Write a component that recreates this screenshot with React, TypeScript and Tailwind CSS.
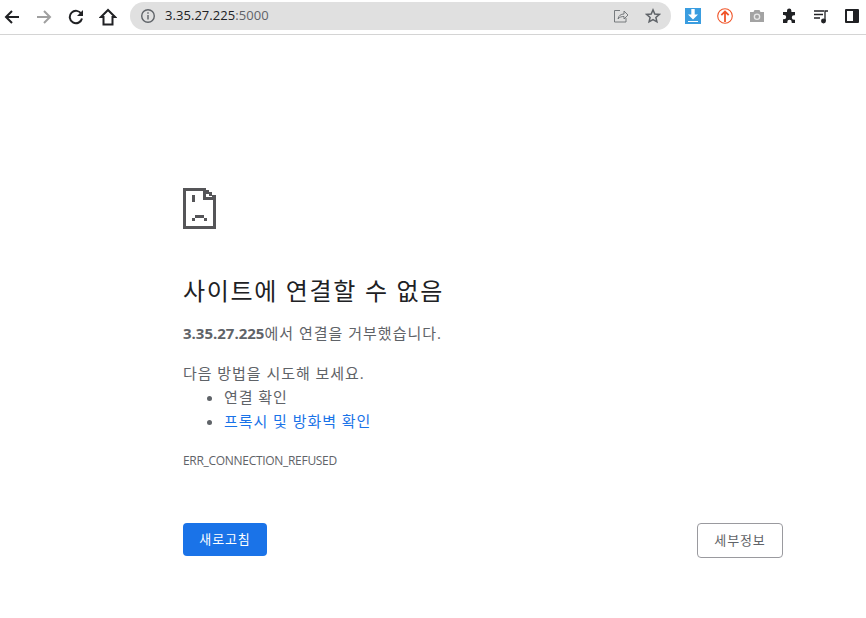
import React from "react";

const font = "font-['Open_Sans','Noto_Sans_CJK_KR',sans-serif]";

function SadTab() {
  const rects = [
    [0, 0, 23, 3], [0, 0, 3, 41], [0, 38, 33, 3], [30, 11, 3, 30],
    [20, 3, 3, 9], [20, 9, 10, 3], [23, 2, 3, 4], [26, 4, 3, 4], [29, 7, 4, 5],
    [9, 7, 3, 7], [12, 27, 9, 3], [9, 30, 3, 3], [21, 30, 3, 3],
  ];
  return (
    <svg width="33" height="41" viewBox="0 0 33 41" fill="#555558" shapeRendering="crispEdges" className="block">
      {rects.map((r, i) => <rect key={i} x={r[0]} y={r[1]} width={r[2]} height={r[3]} />)}
    </svg>
  );
}

function NavButton({ children }: { children: React.ReactNode }) {
  return <div className="w-8 h-8 flex items-center justify-center shrink-0">{children}</div>;
}

export default function App() {
  return (
    <div className={`w-[866px] h-[618px] bg-white overflow-hidden ${font}`}>
      <header className="h-[35px] border-b border-[#d4d4d4] flex items-center">
        <div className="flex items-center -ml-1 mr-[4px] w-[130px] shrink-0">
          <NavButton>
            <svg width="16" height="16" viewBox="0 0 16 16" fill="none" stroke="#202124" strokeWidth="2">
              <path d="M15 8H2M8 2 2 8l6 6" />
            </svg>
          </NavButton>
          <div className="w-[31px] h-8 flex items-center justify-center shrink-0">
            <svg width="16" height="16" viewBox="0 0 16 16" fill="none" stroke="#a0a0a0" strokeWidth="2">
              <path d="M1 8h13M8 2l6 6-6 6" />
            </svg>
          </div>
          <div className="w-[33px] h-8 flex items-center justify-center shrink-0">
            <svg width="16" height="16" viewBox="0 0 16 16" fill="none">
              <path d="M13.4 5A6.2 6.2 0 1 0 14 9.5" stroke="#202124" strokeWidth="2" />
              <path d="M15 1v6H9z" fill="#202124" />
            </svg>
          </div>
          <div className="w-8 h-8 flex items-center justify-center shrink-0">
            <svg width="18" height="18" viewBox="0 0 18 18" fill="none" stroke="#202124" strokeWidth="2">
              <path d="M9 2 2 9h2.500v7.500h9V9H16z" />
            </svg>
          </div>
        </div>
        <div className="w-[541px] h-7 rounded-full bg-[#e0e0e0] flex items-center pl-[10px] pr-[10px] shrink-0 mb-[2px]">
          <svg width="16" height="16" viewBox="0 0 16 16" fill="none" stroke="#5f6368" strokeWidth="1.400">
            <circle cx="8" cy="8" r="6.300" />
            <path d="M8 7v4.500M8 4.300v1.500" />
          </svg>
          <span className="ml-[9px] text-[13px] text-[#202124] tracking-[0.05px]">3.35.27.225<span className="text-[#5f6368]">:5000</span></span>
          <div className="ml-auto flex items-center gap-4">
            <svg width="16" height="16" viewBox="0 0 16 16" fill="none" stroke="#6b6f73" strokeWidth="0.900">
              <path d="M7 2.500H1.500v11.500H13V10" />
              <path d="M5 11c.5-3.500 3-5 6-5V3l4 4-4 4V8.500c-2.500 0-4.500.5-6 2.500z" />
            </svg>
            <svg width="16" height="16" viewBox="0 0 16 16" fill="none" stroke="#5f6368" strokeWidth="1.500">
              <path d="M8 1.900 9.800 6l4.500.4-3.400 3 1 4.400L8 11.500l-3.900 2.300 1-4.400-3.400-3L6.200 6z" />
            </svg>
          </div>
        </div>
        <div className="flex items-center ml-[14px] gap-4 shrink-0 mb-[2px]">
          <svg width="16" height="16" viewBox="0 0 16 16" className="block">
            <rect width="16" height="16" fill="#3a9de0" />
            <path d="M6.300 1h3.400v5.500H13L8 11.500 3 6.500h3.300z" fill="#fff" />
            <rect x="3" y="13" width="10" height="1" fill="#fff" />
          </svg>
          <svg width="16" height="16" viewBox="0 0 16 16" fill="none" stroke="#f0562a" className="block">
            <circle cx="8" cy="8" r="7.300" strokeWidth="1.100" />
            <path d="M8 14V3.500M4.300 7.200 8 3.500l3.700 3.700" strokeWidth="1.800" />
          </svg>
          <svg width="16" height="16" viewBox="0 0 16 16" className="block">
            <path d="M1 4h3.500l1-2h5l1 2H15v10H1z" fill="#a3a3a3" />
            <circle cx="8" cy="8.700" r="3.300" fill="#e8e8e8" />
            <circle cx="8" cy="8.700" r="2" fill="#a3a3a3" />
          </svg>
          <svg width="16" height="16" viewBox="0 0 16 16" fill="#202124" className="block">
            <path d="M6 2.800a2.200 2.200 0 0 1 4.400 0V4H14v3.300h-1a2.200 2.200 0 0 0 0 4.400h1V15h-3.300v-1a2.200 2.200 0 0 0-4.400 0v1H2v-3.700h1a2.200 2.200 0 0 0 0-4.400H2V4h4z" />
          </svg>
          <svg width="16" height="16" viewBox="0 0 16 16" fill="none" stroke="#202124" strokeWidth="1.300" className="block">
            <path d="M1 3h10M1 6.500h9M1 10h6M12 13V3h3" />
            <circle cx="10.500" cy="13" r="1.800" fill="#202124" />
          </svg>
          <svg width="14" height="14" viewBox="0 0 14 14" className="block">
            <rect width="14" height="14" rx="1" fill="#202124" />
            <rect x="2" y="2" width="6" height="10" fill="#fff" />
          </svg>
        </div>
      </header>

      <main className="w-[600px] ml-[183px] pt-[153px]">
        <SadTab />
        <h1 className="mt-[44px] text-[24px] leading-[36px] font-normal text-[#202124] tracking-[1.65px]">사이트에 연결할 수 없음</h1>
        <p className="mt-[12px] text-[15px] leading-[24px] text-[#5f6368]"><strong className="font-bold">3.35.27.225</strong><span className="tracking-[1px]">에서 연결을 거부했습니다.</span></p>
        <p className="mt-[16px] text-[15px] leading-[24px] text-[#5f6368] tracking-[0.95px]">다음 방법을 시도해 보세요.</p>
        <ul className="list-disc pl-[41px] text-[15px] leading-[24px] text-[#5f6368] tracking-[0.95px]">
          <li>연결 확인</li>
          <li><span className="text-[#1a73e8]">프록시 및 방화벽 확인</span></li>
        </ul>
        <p className="mt-[20px] text-[12px] leading-[16px] text-[#5f6368] tracking-[-0.3px]">ERR_CONNECTION_REFUSED</p>
        <div className="mt-[54px] flex justify-between items-start">
          <button className="w-[84px] h-[33px] rounded-[4px] bg-[#1a73e8] text-white text-[13px] leading-none tracking-[0.9px]">새로고침</button>
          <button className="w-[86px] h-[35px] rounded-[4px] border border-[#9a9a9f] bg-white text-[#5f6368] text-[13px] leading-none tracking-[0.9px]">세부정보</button>
        </div>
      </main>
    </div>
  );
}
